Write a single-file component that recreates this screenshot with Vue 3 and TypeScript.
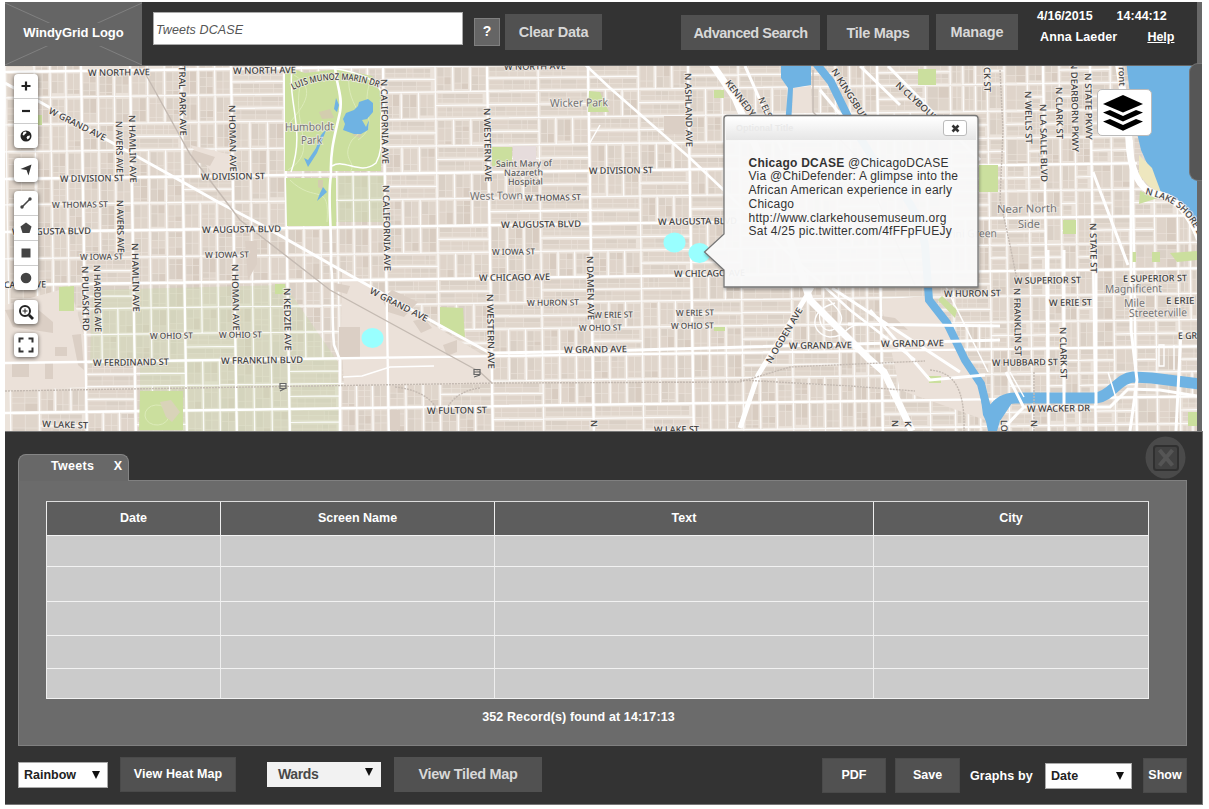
<script setup lang="ts">
type Pt = [number, number]
interface Label { t: string; x: number; y: number; w: number; r?: number; c?: string }
interface Block { x: number; y: number; w: number; h: number; f: string }

// The street grid is turned slightly: rows climb eastward, columns drift right going south.
const rowY = (y: number, x: number) => y - 0.014 * (x - 5)
const colX = (x: number, y: number) => x + 0.016 * (y - 66)

let seed = 41
const rnd = () => {
  seed = (seed * 16807) % 2147483647
  return seed / 2147483647
}

const cols = [5, 34, 81, 130, 181, 231, 284, 335, 383, 435, 487, 538, 588, 638, 688, 738, 788, 835, 877, 925, 950, 987, 1004, 1027, 1043, 1059, 1074, 1090, 1110, 1131, 1152, 1175, 1210]
const rows = [40, 72, 98, 125, 152, 179, 205, 232, 259, 285, 310, 336, 363, 388, 413, 440, 466]

const blocks: Block[] = []
let minor = ''
const seg = (x1: number, y1: number, x2: number, y2: number) =>
  `M${x1.toFixed(1)} ${y1.toFixed(1)}L${x2.toFixed(1)} ${y2.toFixed(1)}`
for (let i = 0; i < cols.length - 1; i++) {
  for (let j = 0; j < rows.length - 1; j++) {
    const my = (rows[j] + rows[j + 1]) / 2
    const x0 = colX(cols[i], my)
    const x1 = colX(cols[i + 1], my)
    const y0 = rowY(rows[j], x0)
    const y1 = rowY(rows[j + 1], x0)
    const horizontal = cols[i] > 340 ? rnd() < 0.5 : rnd() < 0.15
    const n = x1 - x0 < 30 ? 1 : 3
    if (horizontal) {
      const m = (y0 + y1) / 2
      minor += seg(x0, m, x1, m - 0.6)
      for (let k = 0; k < 2; k++) {
        const by = y0 + (k * (y1 - y0)) / 2 + 2
        for (let bx = x0 + 2; bx < x1 - 5; ) {
          const bw = 4 + rnd() * 14
          blocks.push({ x: bx, y: by, w: Math.min(bw, x1 - bx - 2), h: 4.2, f: rnd() < 0.5 ? '#dfd4ca' : '#dad0c6' })
          blocks.push({ x: bx, y: by + 4.8, w: Math.min(bw, x1 - bx - 2), h: 4, f: '#e0d6cc' })
          bx += bw + 0.6
        }
      }
    } else {
      const s = (x1 - x0) / n
      for (let k = 0; k < n; k++) {
        if (k) minor += seg(x0 + k * s, y0, x0 + k * s + 0.4, y1)
        const bx = x0 + k * s + 2
        const bw = (s - 4.8) / 2
        for (let by = y0 + 2; by < y1 - 4; ) {
          const bh = 4 + rnd() * 12
          const h = Math.min(bh, y1 - by - 2)
          blocks.push({ x: bx, y: by, w: bw, h, f: rnd() < 0.5 ? '#dfd4ca' : '#dad0c6' })
          blocks.push({ x: bx + bw + 0.8, y: by, w: bw, h, f: rnd() < 0.3 ? '#d8ccc1' : '#dfd5cb' })
          by += bh + 0.6
        }
      }
    }
  }
}

const line = (pts: Pt[]) => 'M' + pts.map((p) => p.join(' ')).join('L')
const minorGrid =
  cols.map((x) => seg(x, 66, colX(x, 431), 431)).join('') +
  rows.map((y) => seg(5, y, 1197, rowY(y, 1197))).join('') + minor
const mainGrid =
  [81, 130, 181, 231, 284, 383, 487, 588, 688, 877, 1043, 1131, 1090].map((x) => seg(x, 66, colX(x, 431), 431)).join('') +
  [72, 179, 232, 285, 363, 413].map((y) => seg(5, y, 1197, rowY(y, 1197))).join('')

const grand = line([[5, 83], [40, 102], [100, 136], [165, 172], [218, 202], [260, 224], [330, 264], [430, 320], [490, 353], [600, 351], [1000, 340]])
const milwaukee = line([[575, 55], [610, 88], [650, 123], [690, 158], [730, 196], [790, 255], [850, 310], [915, 360]])
const ogden = line([[740, 428], [758, 375], [812, 287]])
const kennedy = line([[708, 58], [735, 98], [770, 180], [810, 300], [868, 358], [884, 372], [912, 431]])
const humboldtDr = 'M335 66C336 85 343 95 340 112C335 135 330 150 331 175C327 200 332 220 331 265C334 290 331 310 334 345L340 360L340 431'
const lakeShore = 'M1118 60C1122 90 1127 110 1129 140C1130 170 1138 188 1155 194C1175 196 1190 214 1200 240'

const river = 'M815 62L831 82L850 121L880 170C905 190 920 215 925 245L929 300L947 323L965 360L981 384L988 412L993 435'
const branch = 'M990 414C998 402 1006 397 1018 398L1096 398C1112 396 1118 378 1133 377L1152 378L1200 384'

const S = (t: string, x: number, x2: number, y: number, c = ''): Label => ({ t, x, y, w: x2 - x, r: -0.8, c })
const V = (t: string, x: number, y: number, y2: number): Label => ({ t, x: x - 3.2, y, w: y2 - y, r: 89 })
const D = (t: string, x: number, y: number, x2: number, y2: number): Label => ({
  t, x, y, w: Math.hypot(x2 - x, y2 - y), r: (Math.atan2(y2 - y, x2 - x) * 180) / Math.PI,
})

const labels: Label[] = [
  S('W NORTH AVE', 88, 150, 76), S('W NORTH AVE', 233, 296, 74), S('W NORTH AVE', 504, 566, 70),
  S('W DIVISION ST', 60, 124, 182), S('W DIVISION ST', 201, 265, 180), S('W DIVISION ST', 589, 653, 174),
  S('W THOMAS ST', 52, 108, 208, 'sm'), S('W THOMAS ST', 525, 581, 201, 'sm'),
  S('W AUGUSTA BLVD', 12, 91, 235), S('W AUGUSTA BLVD', 202, 281, 233), S('W AUGUSTA BLVD', 501, 581, 228), S('W AUGUSTA BLVD', 658, 737, 225),
  S('W IOWA ST', 80, 123, 260, 'sm'), S('W IOWA ST', 205, 249, 258, 'sm'), S('W IOWA ST', 492, 535, 255, 'sm'),
  S('ICAGO AVE', 1, 46, 288), S('W CHICAGO AVE', 479, 550, 281), S('W CHICAGO AVE', 674, 745, 277),
  S('W OHIO ST', 150, 193, 339, 'sm'), S('W OHIO ST', 219, 262, 338, 'sm'), S('W OHIO ST', 579, 622, 331, 'sm'), S('W OHIO ST', 671, 714, 329, 'sm'),
  S('W FERDINAND ST', 93, 169, 366), S('W FRANKLIN BLVD', 221, 303, 364), { t: 'W LAKE ST', x: 42, y: 427, w: 46, r: 2 },
  S('W HURON ST', 527, 579, 306, 'sm'), S('W ERIE ST', 594, 633, 318, 'sm'), S('W ERIE ST', 676, 714, 316, 'sm'),
  S('W GRAND AVE', 564, 627, 353), S('W GRAND AVE', 789, 852, 349), S('W GRAND AVE', 881, 944, 347), S('W FULTON ST', 427, 487, 414),
  S('W LAKE ST', 654, 699, 433), S('W HURON ST', 944, 1001, 297), S('W SUPERIOR ST', 1014, 1081, 284), S('E SUPERIOR ST', 1123, 1187, 282),
  S('W ERIE ST', 1049, 1092, 306), S('E ERIE ST', 1166, 1208, 304), S('E GRAND', 1178, 1216, 339), S('W HUBBARD ST', 992, 1058, 366), S('W WACKER DR', 1027, 1090, 412),
  V('N AVERS AVE', 119, 121, 173), V('N AVERS AVE', 120, 200, 253), V('N HAMLIN AVE', 132, 115, 183), V('N HAMLIN AVE', 135, 243, 312),
  V('TRAL PARK AVE', 182, 66, 136), V('N HOMAN AVE', 232, 105, 172), V('N HOMAN AVE', 235, 264, 331), V('N PULASKI RD', 85, 266, 331),
  V('N HARDING AVE', 97, 265, 332), V('N KEDZIE AVE', 287, 288, 351), V('N CALIFORNIA AVE', 384, 79, 164), V('N CALIFORNIA AVE', 386, 185, 271),
  V('N WESTERN AVE', 487, 108, 182), V('N WESTERN AVE', 490, 294, 369), V('N DAMEN AVE', 590, 256, 320), V('N ASHLAND AVE', 688, 73, 147),
  V('N', 594, 420, 427), V('N', 895, 420, 427), V('K', 908, 421, 427), V('N', 1034, 420, 427), V('LO', 1004, 420, 432),
  V('CK ST', 987, 67, 92), V('N WELLS ST', 1028, 91, 144), V('N LA SALLE BLVD', 1043, 104, 182), V('N CLARK ST', 1059, 87, 139), V('N DEARBORN PKWY', 1074, 62, 152),
  V('N STATE PKWY', 1088, 73, 140), V('ront', 1122, 67, 86), V('N STATE ST', 1093, 223, 273), V('N FRANKLIN ST', 1017, 288, 356), V('N CLARK ST', 1063, 327, 379),
  D('W GRAND AVE', 48, 113, 104, 141), D('W GRAND AVE', 369, 293, 426, 322), D('KENNEDY', 725, 83, 751, 117), D('N ELSTON', 758, 99, 773, 133),
  D('N KINGSBURY', 831, 71, 866, 126), D('N CLYBOURN', 895, 86, 940, 127), D('N OGDEN AVE', 771, 364, 803, 310),
  S('Wicker Park', 550, 608, 107, 'lg'), S('Humboldt', 285, 334, 131, 'lg'), S('Park', 301, 322, 144, 'lg'),
  S('Saint Mary of', 496, 552, 167, 'md'), S('Nazareth', 504, 543, 176, 'md'), S('Hospital', 508, 543, 185, 'md'),
  S('West Town', 470, 523, 200, 'lg'), S('Near North', 997, 1057, 213, 'lg'), S('Side', 1018, 1040, 228, 'lg'), S('Cabrini Green', 930, 997, 238, 'lg'),
  S('Magnificent', 1105, 1162, 293, 'lg'), S('Mile', 1124, 1145, 307, 'lg'), S('Streeterville', 1129, 1187, 317, 'lg'),
]

const columns = ['Date', 'Screen Name', 'Text', 'City']
const records = 5
</script>

<template>
  <div class="page">
    <div class="top">
      <div class="main">
        <header class="bar">
          <div class="logo">
            <svg width="137" height="64"><path d="M0 1L137 63M0 63L137 1" /></svg>
            <span>WindyGrid Logo</span>
          </div>
          <div class="search">Tweets DCASE</div>
          <div class="help-btn">?</div>
          <div class="btn clear">Clear Data</div>
          <div class="btn adv">Advanced Search</div>
          <div class="btn tile">Tile Maps</div>
          <div class="btn manage">Manage</div>
          <div class="user">
            <div class="line"><span>4/16/2015</span><span class="time">14:44:12</span></div>
            <div class="line second"><span>Anna Laeder</span><u>Help</u></div>
          </div>
        </header>
        <div class="map">
          <svg class="canvas" viewBox="5 66 1192 365" width="1192" height="365">
            <rect x="5" y="66" width="1192" height="365" fill="#ebe3db" />
            <rect v-for="(b, i) in blocks" :key="i" :x="b.x" :y="b.y" :width="b.w" :height="b.h" :fill="b.f" />
            <path d="M92 290L285 285L338 362L339 431H140V365H90Z" fill="#cdd8b0" opacity=".42" />
            <path d="M338 176H384V222H336Z" fill="#cbd8ae" opacity=".5" />
            <g fill="none" stroke="#fff" clip-path="url(#land)">
              <path :d="minorGrid" stroke-width="1.25" opacity=".85" />
            </g>
            <path d="M5 305L70 287L85 340V387L5 391ZM342 270L488 358L492 384L344 386L341 330ZM190 145L232 155L240 172L218 180ZM880 300L925 296L980 385L985 420L900 390ZM793 88L811 86L812 113H792Z" fill="#ebe1d9" />
            <g fill="#dbcfc5">
              <path d="M339 327H360V358H339ZM382 299L392 290L418 302L404 317L388 312ZM413 321L424 318L432 328L421 333ZM335 283L350 286L347 294L336 291ZM443 345L457 340V352L447 356ZM5 310L35 307L53 322V333L13 327ZM72 335L81 334L84 370L78 365ZM12 362H29V377H12ZM45 362H53V379H45ZM55 347H67V356H55ZM193 150L215 157L210 166L190 160ZM245 241L257 241V264L248 280ZM388 430V410H400V430Z" />
              <path d="M664 116H690V134H664ZM875 315L895 318L908 330L880 327Z" />
            </g>
            <path :d="mainGrid" fill="none" stroke="#fff" stroke-width="2.300" clip-path="url(#land)" />
            <g fill="#cbdf9e">
              <path d="M285 137V68H290L305 73L340 69L372 76L381 92V171H285ZM286 178H336V226H287Z" />
              <path d="M440 307L463 308L465 339L440 324ZM140 391H183V430H139ZM59 287L74 286V311H59ZM275 284H285V294H275ZM492 147H512V166H492ZM589 91L600 92L609 112H588ZM714 90H724V98H714ZM918 69H936V85H918ZM979 165H998V192H979ZM938 300L942 296L957 310L955 318ZM929 376H941V383H929ZM1063 220H1076V234H1063ZM1130 252H1136V262H1130ZM1152 252H1160V262H1152ZM1170 253L1197 251V260L1177 262ZM1188 412H1197V426H1188ZM1140 191L1158 198L1139 204ZM38 115H42V125H38ZM714 327H725V331H714Z" />
            </g>
            <path d="M513 146H536V166H513Z" fill="#e6dcdc" />
            <path d="M319 112L330 109L334 118L322 119ZM352 135L362 132L360 138ZM318 180H323V190L318 187Z" fill="#d3cdae" />
            <g fill="none" stroke="#dcebb9" stroke-width="1">
              <path d="M294 75C320 90 300 110 287 126M300 85C292 130 320 150 288 170M349 75C345 110 378 120 352 140C340 160 358 162 350 172M370 82C360 110 380 125 358 140M290 180C315 205 330 180 327 222M145 416a12 10 0 1 0 24 -2a12 10 0 1 0 -24 2" />
            </g>
            <path d="M160 402L171 400L180 412L172 422L166 417Z" fill="#d9d3b9" />
            <g fill="#6fb3e3">
              <path d="M346 113L354 110L358 106L359 102L368 99L373 103L373 112L367 119L362 120L366 127L369 120L368 130L361 134H354L343 130L345 124L343 119Z" />
              <path d="M336 98L339 105L337 112L334 109ZM327 128L317 153L308 167L304 158L308 160L316 148L321 135ZM323 187L327 192L317 201L320 193Z" />
              <path d="M781 64H811V85L793 88L791 125H785L788 88L781 78Z" />
              <path d="M1126 60H1198V232L1185 205L1160 193L1149 168L1141 150L1132 112Z" />
            </g>
            <path d="M1139 155L1152 168L1162 195L1149 186L1139 175Z" fill="#eee7bf" />
            <g fill="none" stroke="#6fb3e3">
              <path :d="river" stroke-width="8" />
              <path :d="branch" stroke-width="11" />
            </g>
            <path d="M980 392L990 405L1002 398L1012 403L1000 421L997 431H991L983 415Z" fill="#6fb3e3" />
            <g fill="none" stroke="#fff">
              <path :d="humboldtDr" stroke-width="2.6" />
              <path d="M332 166C345 158 360 176 376 163C386 145 377 130 383 106C386 80 360 72 330 68M292 70C287 100 306 130 291 172M592 210L520 211M600 125L588 146M343 377L362 376L390 367L434 366M1010 372L1024 397M1108 372L1116 398M988 372L945 285" stroke-width="1.5" />
              <path :d="grand" stroke-width="3" />
              <path :d="milwaukee" stroke-width="2.6" />
              <path :d="ogden" stroke-width="5" />
              <path :d="kennedy" stroke-width="7" />
              <path d="M745 66L782 150M820 90L845 120M888 66L950 130L980 160M860 66L900 105M832 288L960 372M848 324L1000 326M870 310L930 380L985 375M1001 431L1018 413L1024 407H1110L1128 389L1160 390L1197 396M1093 172L1128 265M1006 372L1024 408" stroke-width="3" />
              <path d="M835 303C808 310 810 334 830 337C850 337 842 322 870 324M828 299C842 312 846 320 836 328C826 335 818 326 820 312M1159 366V345H1164V366ZM1174 345V370" stroke-width="1.4" />
              <path :d="lakeShore" stroke-width="7" />
              <path d="M1131 140V330L1137 380L1130 431M1048 250V405M1064 250V405M1096 250V405M1181 330L1176 431" stroke-width="3" />
            </g>
            <g fill="none" stroke="#c4bab2" stroke-width="1.4">
              <path d="M145 73L190 154L240 220L330 290L480 372L492 383" />
              <path d="M5 391L250 387L500 383L740 382L790 367L925 361M740 380L850 386L915 391M395 387C425 390 437 405 437 412M480 388C460 390 448 403 447 410M930 370C955 372 965 390 964 431M1000 70L1003 130L1000 200L1010 245L1017 280M1034 372V431" stroke-dasharray="2 1" />
              <path d="M813 70V112L860 160L915 285" />
            </g>
            <g class="labels">
              <text v-for="(l, i) in labels" :key="i" :class="l.c" :textLength="l.w" lengthAdjust="spacingAndGlyphs" :transform="`translate(${l.x} ${l.y}) rotate(${l.r})`">{{ l.t }}</text>
              <path id="munoz" d="M293 90C318 77 352 76 382 89" fill="none" stroke="none" />
              <text textLength="88" lengthAdjust="spacingAndGlyphs"><textPath href="#munoz">LUIS MUNOZ MARIN DR</textPath></text>
              <path id="shore" d="M1145 194C1165 200 1185 202 1201 243" fill="none" stroke="none" />
              <text><textPath href="#shore">N LAKE SHORE DR</textPath></text>
            </g>
            <g fill="none" stroke="#666" stroke-width="1.200">
              <path d="M280 383.500H286V388.500H280ZM280 391L286 388M280 386H286M474 369.500H480V374.500H474ZM474 377L480 375M474 372H480" />
            </g>
            <g fill="#99ffff">
              <ellipse cx="372.500" cy="338" rx="11" ry="10" />
              <ellipse cx="674.500" cy="242.500" rx="11" ry="10" />
              <ellipse cx="699.500" cy="253" rx="11" ry="10" />
            </g>
            <defs>
              <linearGradient id="cap" x1="0" y1="0" x2="0" y2="1"><stop offset="0" stop-color="#fff" /><stop offset="1" stop-color="#e6e6e6" /></linearGradient>
              <filter id="shade" x="-5%" y="-5%" width="110%" height="112%"><feDropShadow dx="1" dy="2" stdDeviation="1.500" flood-opacity=".35" /></filter>
              <clipPath id="land"><path d="M5 66H1120L1133 145L1142 187L1175 200L1197 235V431H5Z" /></clipPath>
            </defs>
            <path d="M727 115.500H975Q978 115.500 978 118.500V287H724V270L704.500 252L724 234V118.500Q724 115.500 727 115.500Z" fill="#fcfcfc" fill-opacity=".93" stroke="#777" stroke-width="1.300" filter="url(#shade)" />
            <path d="M726 117H976V140H726Z" fill="url(#cap)" />
          </svg>

          <div class="popup">
            <div class="cap"><span class="ghost">Optional Title</span>
              <i class="close"><svg width="9" height="9" viewBox="0 0 9 9"><path d="M1.500 1.500L7.500 7.500M7.500 1.500L1.500 7.500" stroke="#333" stroke-width="2.600" /></svg></i>
            </div>
            <p><b>Chicago DCASE</b> @ChicagoDCASE<br>Via @ChiDefender: A glimpse into the<br>African American experience in early<br>Chicago<br>http://www.clarkehousemuseum.org<br>Sat 4/25 pic.twitter.com/4fFFpFUEJy</p>
          </div>

          <div class="tools">
            <div class="group">
              <i><svg viewBox="0 0 24 24"><path d="M12 7.500V16.500M7.500 12H16.500" stroke="#222" stroke-width="2.200" /></svg></i>
              <i><svg viewBox="0 0 24 24"><path d="M8 12H16" stroke="#222" stroke-width="2.200" /></svg></i>
              <i><svg viewBox="0 0 24 24"><circle cx="12" cy="12" r="5.500" fill="#222" /><path d="M9.500 8L12 7.500L12.500 9L11 10L10 11.500L8.500 11ZM13.500 12L16 11.500L15.500 14L13.500 15.500L12.500 13.500Z" fill="#fff" /></svg></i>
            </div>
            <div class="group"><i><svg viewBox="0 0 24 24"><path d="M17.500 6.500L14.500 17.500L12.500 12L6.500 11Z" fill="#333" /></svg></i></div>
            <div class="group">
              <i><svg viewBox="0 0 24 24"><path d="M8 16L16 8" stroke="#444" stroke-width="1.600" /><circle cx="8" cy="16" r="1.700" fill="#444" /><circle cx="16" cy="8" r="1.700" fill="#444" /></svg></i>
              <i><svg viewBox="0 0 24 24"><path d="M12 6.500L17.500 10.500L15.500 17H8.500L6.500 10.500Z" fill="#444" /></svg></i>
              <i><svg viewBox="0 0 24 24"><path d="M7.500 7.500H16.500V16.500H7.500Z" fill="#444" /></svg></i>
              <i><svg viewBox="0 0 24 24"><circle cx="12" cy="12" r="5.300" fill="#444" /></svg></i>
            </div>
            <div class="group"><i><svg viewBox="0 0 24 24"><circle cx="11" cy="11" r="5" fill="none" stroke="#222" stroke-width="2" /><path d="M15 15L19 19" stroke="#222" stroke-width="2.800" /><path d="M11 8.500V13.500M8.500 11H13.500" stroke="#222" stroke-width="1" /></svg></i></div>
            <div class="group"><i><svg viewBox="0 0 24 24"><path d="M5.500 9.500V5.500H9.500M14.500 5.500H18.500V9.500M18.500 14.500V18.500H14.500M9.500 18.500H5.500V14.500" fill="none" stroke="#333" stroke-width="2" /></svg></i></div>
          </div>

          <div class="layers">
            <svg width="42" height="38" viewBox="0 0 42 38">
              <path d="M21 1L41 10L21 18.500L1 10Z" />
              <path d="M1 18.500L8 16L21 22L34 16L41 18.500L21 27.500Z" />
              <path d="M1 27.500L8 25L21 31L34 25L41 27.500L21 36.800Z" />
            </svg>
          </div>
        </div>
      </div>
      <div class="rail"><div class="handle"></div></div>
    </div>

    <section class="bottom">
      <svg class="dismiss" width="42" height="44" viewBox="0 0 42 44">
        <ellipse cx="20.500" cy="21.500" rx="20" ry="21" fill="#4a4a4a" />
        <rect x="9" y="10" width="24" height="24" rx="2.500" fill="#424242" stroke="#303030" stroke-width="2" />
        <path d="M14.500 14L27.500 29.500M27.500 14L14.500 29.500" stroke="#555" stroke-width="4" />
      </svg>
      <div class="tab"><span>Tweets</span><span class="x">X</span></div>
      <div class="sheet">
        <div class="grid">
          <div v-for="c in columns" :key="c" class="th">{{ c }}</div>
          <template v-for="r in records" :key="r">
            <div v-for="c in columns" :key="c" class="td"></div>
          </template>
        </div>
        <div class="count">352 Record(s) found at 14:17:13</div>
      </div>
      <div class="actions">
        <div class="select rainbow"><span>Rainbow</span><i></i></div>
        <div class="sbtn heat">View Heat Map</div>
        <div class="select wards"><span>Wards</span><i></i></div>
        <div class="btn tiled">View Tiled Map</div>
        <div class="sbtn pdf">PDF</div>
        <div class="sbtn save">Save</div>
        <div class="by">Graphs by</div>
        <div class="select date"><span>Date</span><i></i></div>
        <div class="sbtn show">Show</div>
      </div>
    </section>
  </div>
</template>

<style>
body { margin: 0; background: #fff; }
</style>

<style scoped>
.page { box-sizing: border-box; width: 1209px; height: 809px; padding: 2px 7px 5px 5px; overflow: hidden; font-family: "Liberation Sans", Arial, sans-serif; font-weight: bold; font-size: 12.500px; letter-spacing: 0; color: #fff; }
.top { display: flex; height: 429px; }
.main { width: 1192px; }
.bar { display: flex; align-items: flex-start; height: 64px; background: #333; box-shadow: inset 0 -1px #666; }
.logo { position: relative; width: 137px; height: 64px; background: #656565; display: flex; align-items: center; justify-content: center; font-size: 13px; letter-spacing: -.05px; }
.logo svg { position: absolute; left: 0; top: 0; fill: none; stroke: #808080; }
.logo span { position: relative; background: #656565; padding: 2px 0 6px; }
.search { box-sizing: border-box; width: 310px; height: 33px; margin: 10px 0 0 11px; background: #fff; border: 1px solid #aaa; padding-left: 2px; font: italic 12.500px/34px "Liberation Sans", Arial, sans-serif; letter-spacing: .1px; color: #555; }
.help-btn { box-sizing: border-box; width: 26px; height: 28px; margin: 16px 0 0 11px; background: #656565; border: 1px solid #808080; text-align: center; font-size: 14px; line-height: 25px; }
.btn { background: #515151; color: #d8d8d8; font-size: 14.500px; text-align: center; height: 36px; line-height: 36px; }
.clear { width: 97px; margin: 12px 0 0 5px; letter-spacing: -.2px; }
.adv { width: 139px; height: 35px; margin: 13px 0 0 79px; letter-spacing: -.5px; }
.tile { width: 102px; height: 35px; margin: 13px 0 0 7px; letter-spacing: -.3px; }
.manage { width: 82px; margin: 12px 0 0 7px; letter-spacing: -.2px; }
.user { margin: 7px 0 0 19px; width: 150px; }
.line { display: flex; height: 14px; line-height: 14px; }
.line .time { margin-left: 24px; }
.second { margin: 7px 0 0 3px; }
.second span { letter-spacing: .15px; }
.second u { margin-left: 30px; }
.map { position: relative; height: 365px; overflow: hidden; }
.canvas { display: block; }
.labels text { font: 500 9px "Noto Sans", "Open Sans", sans-serif; fill: #404040; paint-order: stroke; stroke: #f3eeea; stroke-width: 1.800px; stroke-opacity: .8; letter-spacing: 0; }
.labels text.sm { font-size: 8.300px; fill: #4d4d4d; }
.labels text.md { font-size: 9px; fill: #5c5c5c; }
.labels text.lg { font-size: 11px; font-weight: 400; fill: #737373; }
.rail { width: 5px; background: #686868; position: relative; }
.handle { position: absolute; top: 61px; right: 0; width: 13px; height: 118px; box-sizing: border-box; border-radius: 9px 0 0 9px; background: #565656; border: 1px solid #747474; border-right: 0; }
.popup { position: absolute; left: 719px; top: 50px; width: 254px; color: #333; }
.cap { height: 24px; display: flex; align-items: center; justify-content: space-between; padding: 0 11px 0 12px; }
.ghost { color: #e9e9e9; font-size: 9px; }
.close { width: 22px; height: 14px; background: #fff; border: 1px solid #bbb; border-radius: 3px; display: flex; align-items: center; justify-content: center; }
.popup p { margin: 16.500px 0 0 24.500px; font-size: 12px; font-weight: normal; line-height: 13.800px; letter-spacing: .25px; white-space: nowrap; }
.tools { position: absolute; left: 9px; top: 8px; display: flex; flex-direction: column; gap: 9.500px; }
.group { width: 24px; background: #fff; border-radius: 4px; box-shadow: 0 1px 4px rgba(0,0,0,.6); }
.group i { display: block; height: 24px; border-top: 1px solid #ccc; }
.group i:first-child { border-top: 0; }
.group svg { display: block; width: 24px; height: 24px; fill: none; }
.layers { position: absolute; left: 1092px; top: 23px; box-sizing: border-box; width: 55px; height: 47px; background: #fff; border: 1px solid #bbb; border-radius: 5px; display: flex; align-items: center; justify-content: center; padding-right: 3px; }
.bottom { position: relative; box-sizing: border-box; width: 1198px; height: 374px; background: #333; border: 1px solid #777; border-left: 0; padding: 22px 15px 0 13px; }
.dismiss { position: absolute; left: 1140px; top: 4px; }
.tab { position: relative; box-sizing: border-box; width: 111px; height: 27px; margin-bottom: -1px; border: 1px solid #858585; border-bottom: 0; border-radius: 8px 8px 0 0; background: #686868; display: flex; padding: 0 6px 0 32px; line-height: 23px; justify-content: space-between; z-index: 1; }
.tab span:first-child { letter-spacing: .3px; }
.sheet { box-sizing: border-box; width: 1169px; height: 266px; background: #6b6b6b; border: 1px solid #808080; padding: 20px 0 0 27px; }
.grid { width: 1103px; display: grid; box-sizing: border-box; grid-template-columns: 174px 274px 379px 275px; grid-template-rows: 34px 31px 35px 34px 33px 30px; border-left: 1px solid #eee; border-top: 1px solid #ddd; }
.th, .td { box-sizing: border-box; border-right: 1px solid #eee; border-bottom: 1px solid #f2f2f2; }
.th { background: #5d5d5d; text-align: center; line-height: 32px; }
.td { background: #cbcbcb; }
.count { width: 1065px; margin-top: 11px; text-align: center; line-height: 14px; letter-spacing: .12px; }
.actions { display: flex; align-items: flex-start; padding-top: 11px; }
.select { box-sizing: border-box; display: flex; justify-content: space-between; height: 26px; line-height: 24px; background: #fff; border: 1px solid #aaa; color: #222; }
.select i { width: 0; height: 0; border: 4px solid transparent; border-top: 8px solid #111; border-bottom: 0; }
.rainbow { width: 90px; margin-top: 5px; padding: 0 7px 0 5px; }
.rainbow i { margin-top: 8px; }
.sbtn { box-sizing: border-box; background: #515151; border: 1px solid #4a4a4a; height: 35px; line-height: 32px; text-align: center; }
.heat { width: 116px; margin-left: 12px; letter-spacing: .1px; }
.wards { width: 114px; height: 25px; margin: 5px 0 0 31px; padding: 0 7px 0 10px; background: #f2f2f2; border-color: #f2f2f2; color: #484848; font-size: 14px; line-height: 23px; letter-spacing: -.4px; }
.wards i { margin-top: 5px; }
.tiled { width: 148px; height: 35px; line-height: 35px; margin-left: 13px; letter-spacing: -.3px; }
.pdf { width: 64px; margin: 1px 0 0 280px; }
.save { width: 65px; margin: 1px 0 0 9px; }
.by { margin: 1px 0 0 10px; width: 65px; line-height: 36px; white-space: nowrap; letter-spacing: .1px; }
.date { width: 87px; margin: 6px 0 0 10px; padding: 0 7px 0 5px; }
.date i { margin-top: 8px; }
.show { width: 44px; margin: 1px 0 0 11px; }
.actions > div { flex-shrink: 0; }
</style>
